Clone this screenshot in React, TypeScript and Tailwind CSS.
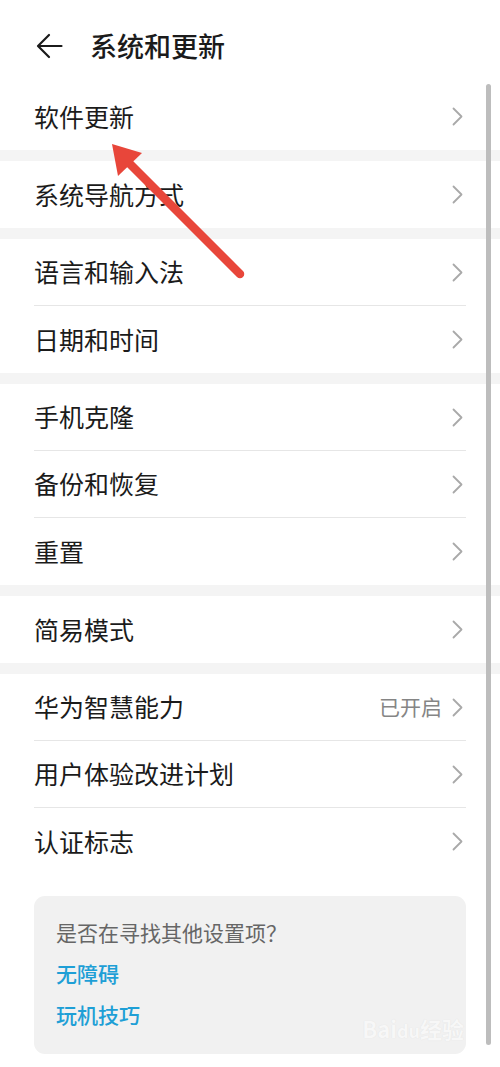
import React from "react";

type Row = { label: string; value?: string };

const groups: Row[][] = [
	[{ label: "软件更新" }],
	[{ label: "系统导航方式" }],
	[{ label: "语言和输入法" }, { label: "日期和时间" }],
	[{ label: "手机克隆" }, { label: "备份和恢复" }, { label: "重置" }],
	[{ label: "简易模式" }],
	[
		{ label: "华为智慧能力", value: "已开启" },
		{ label: "用户体验改进计划" },
		{ label: "认证标志" },
	],
];

function Chevron() {
	return (
		<svg width="11" height="19" viewBox="0 0 11 19" fill="none" className="shrink-0">
			<polyline
				points="1.5,1.5 9.5,9.5 1.5,17.5"
				stroke="#a9a9a9"
				strokeWidth="1.8"
				strokeLinecap="round"
				strokeLinejoin="round"
			/>
		</svg>
	);
}

function SettingRow({ row, last }: { row: Row; last: boolean }) {
	return (
		<div className="px-[34px]">
			<div
				className={
					"h-[67px] flex items-center justify-between " +
					(last ? "" : "border-b border-[#e6e6e6]")
				}
			>
				<span className="text-[25px] text-[#1b1b1b]">{row.label}</span>
				<div className="flex items-center gap-[10px] pr-[3px]">
					{row.value && (
						<span className="text-[21px] text-[#858585]">{row.value}</span>
					)}
					<Chevron />
				</div>
			</div>
		</div>
	);
}

export default function App() {
	return (
		<div
			className="relative w-[500px] h-[1067px] bg-white overflow-hidden"
			style={{ fontFamily: '"Noto Sans CJK SC", "Noto Sans", sans-serif' }}
		>
			{/* header */}
			<div className="h-[83px] flex items-center pl-[36px] pt-[9px]">
				<svg width="27" height="26" viewBox="0 0 27 26" fill="none">
					<path
						d="M25.5 13H2.5M13 2L2 13L13 24"
						stroke="#1b1b1b"
						strokeWidth="2.2"
						strokeLinecap="round"
						strokeLinejoin="round"
					/>
				</svg>
				<span className="ml-[27px] text-[27px] font-medium text-[#1b1b1b]">
					系统和更新
				</span>
			</div>

			{groups.map((g, gi) => (
				<div key={gi}>
					{gi > 0 && <div className="h-[11px] bg-[#f4f4f4]" />}
					{g.map((row, ri) => (
						<SettingRow key={row.label} row={row} last={ri === g.length - 1} />
					))}
				</div>
			))}

			{/* other settings card */}
			<div className="mx-[34px] mt-[21px] w-[432px] h-[158px] rounded-[11px] bg-[#f1f1f1] px-[22px] pt-[22px] flex flex-col gap-[13px]">
				<span className="text-[21px] leading-[28px] text-[#666666]">
					是否在寻找其他设置项？
				</span>
				<span className="text-[21px] leading-[28px] font-medium text-[#1e9fd6]">
					无障碍
				</span>
				<span className="text-[21px] leading-[28px] font-medium text-[#1e9fd6]">
					玩机技巧
				</span>
			</div>

			{/* scrollbar */}
			<div className="absolute left-[486px] top-[84px] w-[5px] h-[961px] rounded-full bg-[#bdbdbd]" />

			{/* watermark */}
			<div className="absolute right-[36px] bottom-[22px] text-[22px] font-bold text-[#f7f7f7] [text-shadow:0_0_1px_#dedede]">
				Bai<span className="text-[18px]">du</span>经验
			</div>

			{/* red annotation arrow */}
			<svg className="absolute left-0 top-0" width="500" height="300" viewBox="0 0 500 300">
				<line
					x1="240"
					y1="274"
					x2="124"
					y2="158"
					stroke="#e8463a"
					strokeWidth="8.5"
					strokeLinecap="round"
				/>
				<polygon points="112,144 142,153 118,176" fill="#e8463a" />
			</svg>
		</div>
	);
}
